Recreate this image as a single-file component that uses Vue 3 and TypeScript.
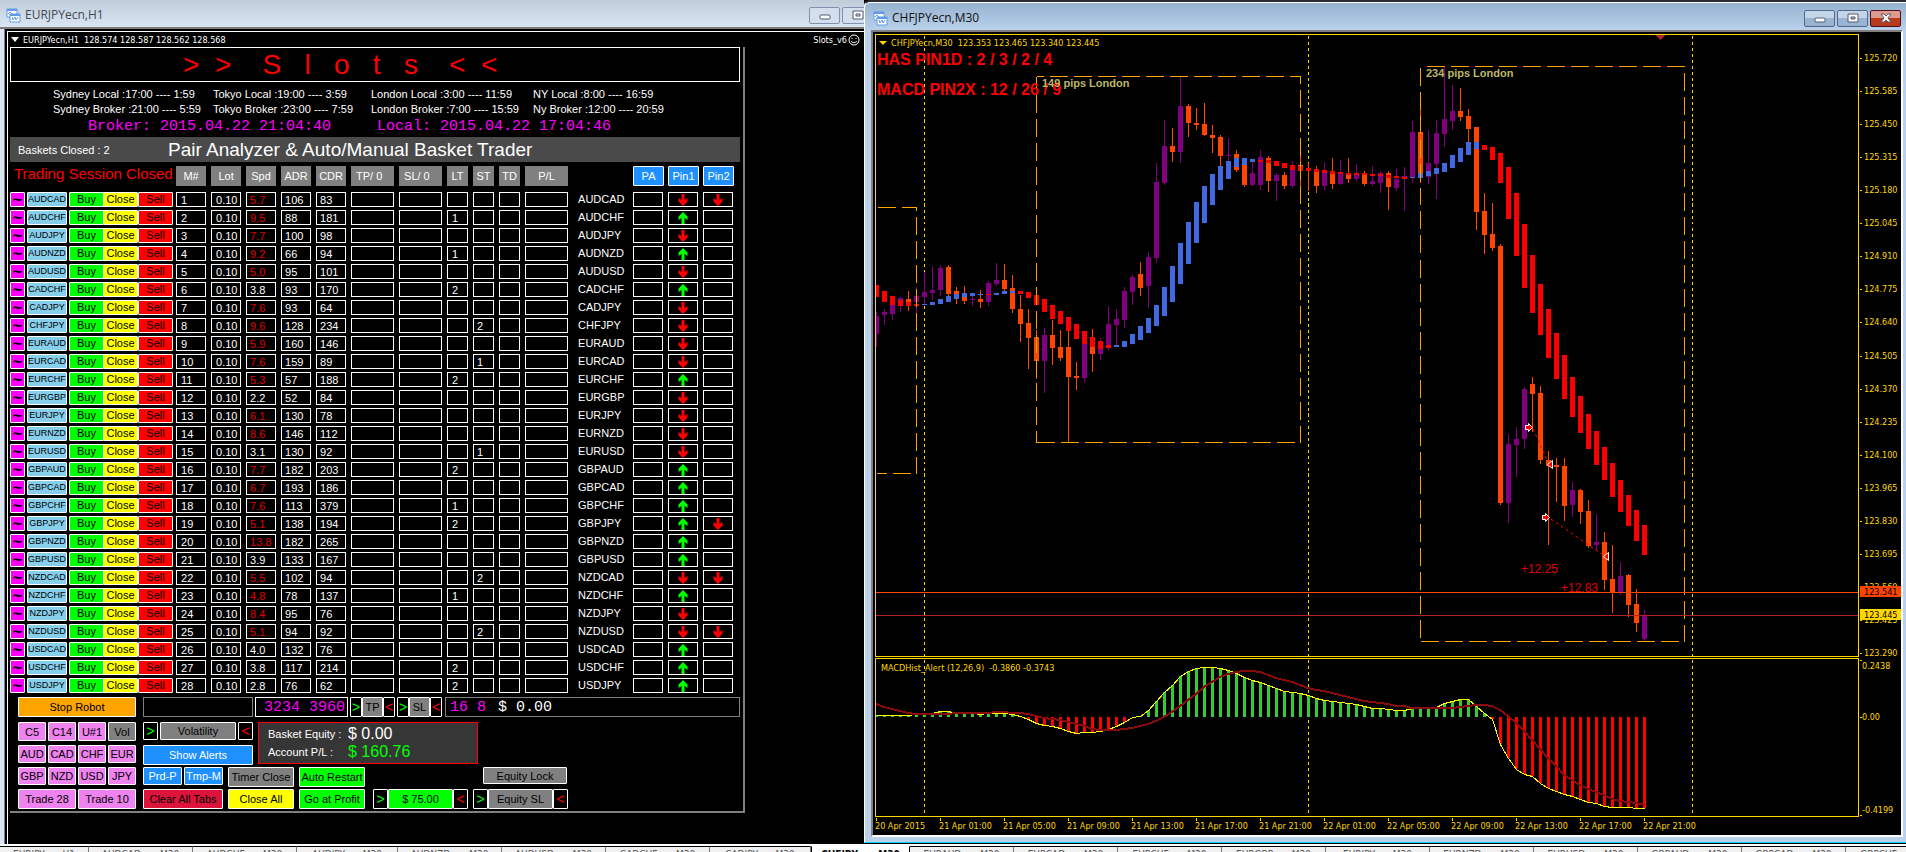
<script setup lang="ts">
type Dir = 'up' | 'down' | ''
interface PairRow {
  pair: string
  spread: string
  adr: number
  cdr: number
  lt: string
  st: string
  pin1: Dir
  pin2: Dir
}

const U: Dir = 'up'
const D: Dir = 'down'
const raw: [string, string, number, number, string, string, Dir, Dir][] = [
  ['AUDCAD', '5.7', 106, 83, '', '', D, D],
  ['AUDCHF', '9.5', 88, 181, '1', '', U, ''],
  ['AUDJPY', '7.7', 100, 98, '', '', D, ''],
  ['AUDNZD', '9.2', 66, 94, '1', '', U, ''],
  ['AUDUSD', '5.0', 95, 101, '', '', D, ''],
  ['CADCHF', '3.8', 93, 170, '2', '', U, ''],
  ['CADJPY', '7.6', 93, 64, '', '', D, ''],
  ['CHFJPY', '9.6', 128, 234, '', '2', D, ''],
  ['EURAUD', '5.9', 160, 146, '', '', D, ''],
  ['EURCAD', '7.6', 159, 89, '', '1', D, ''],
  ['EURCHF', '5.3', 57, 188, '2', '', U, ''],
  ['EURGBP', '2.2', 52, 84, '', '', D, ''],
  ['EURJPY', '6.1', 130, 78, '', '', D, ''],
  ['EURNZD', '8.6', 146, 112, '', '', D, ''],
  ['EURUSD', '3.1', 130, 92, '', '1', D, ''],
  ['GBPAUD', '7.7', 182, 203, '2', '', U, ''],
  ['GBPCAD', '6.7', 193, 186, '', '', U, ''],
  ['GBPCHF', '7.6', 113, 379, '1', '', U, ''],
  ['GBPJPY', '5.1', 138, 194, '2', '', U, D],
  ['GBPNZD', '13.8', 182, 265, '', '', U, ''],
  ['GBPUSD', '3.9', 133, 167, '', '', U, ''],
  ['NZDCAD', '5.5', 102, 94, '', '2', D, D],
  ['NZDCHF', '4.8', 78, 137, '1', '', U, ''],
  ['NZDJPY', '8.4', 95, 76, '', '', D, ''],
  ['NZDUSD', '5.1', 94, 92, '', '2', D, D],
  ['USDCAD', '4.0', 132, 76, '', '', U, ''],
  ['USDCHF', '3.8', 117, 214, '2', '', U, ''],
  ['USDJPY', '2.8', 76, 62, '2', '', U, ''],
]
const rows: PairRow[] = raw.map(([pair, spread, adr, cdr, lt, st, pin1, pin2]) => ({
  pair, spread, adr, cdr, lt, st, pin1, pin2,
}))

const slotsTitle = '>  >    S   l   o   t   s    <  <'
const heads = ['M#', 'Lot', 'Spd', 'ADR', 'CDR', 'TP/ 0', 'SL/ 0', 'LT', 'ST', 'TD', 'P/L']
const pins = ['PA', 'Pin1', 'Pin2']
const sessions = [
  'Sydney Local :17:00 ---- 1:59', 'Tokyo Local :19:00 ---- 3:59', 'London Local :3:00 ---- 11:59', 'NY Local :8:00 ---- 16:59',
  'Sydney Broker :21:00 ---- 5:59', 'Tokyo Broker :23:00 ---- 7:59', 'London Broker :7:00 ---- 15:59', 'Ny Broker :12:00 ---- 20:59',
]
const keys = ['C5', 'C14', 'U#1', 'Vol', 'AUD', 'CAD', 'CHF', 'EUR', 'GBP', 'NZD', 'USD', 'JPY']

/* Candles: direction, high, body top, body bottom, low */
const candles: [string, number, number, number, number][] = [
  ['b', 312, 316, 334, 346], ['b', 309, 312, 315, 324], ['b', 305, 305, 314, 319], ['b', 297, 298, 306, 311],
  ['s', 291, 299, 306, 310], ['b', 287, 296, 302, 312], ['b', 272, 292, 297, 304], ['b', 266, 290, 293, 299],
  ['b', 265, 268, 290, 295], ['s', 265, 267, 294, 296], ['s', 287, 291, 299, 303], ['s', 286, 293, 301, 303],
  ['b', 296, 299, 300, 305], ['s', 290, 299, 302, 307], ['b', 281, 283, 302, 305], ['b', 263, 280, 284, 285],
  ['s', 264, 280, 289, 291], ['s', 275, 288, 309, 312], ['s', 295, 309, 324, 341], ['s', 309, 323, 338, 368],
  ['s', 330, 337, 361, 378], ['b', 328, 335, 361, 392], ['s', 320, 335, 348, 364], ['s', 330, 347, 358, 360],
  ['s', 331, 347, 377, 442], ['s', 362, 376, 378, 389], ['b', 344, 344, 378, 382], ['s', 329, 347, 354, 371],
  ['b', 338, 349, 354, 359], ['b', 306, 324, 345, 350], ['b', 309, 319, 325, 344], ['b', 287, 291, 320, 327],
  ['b', 275, 277, 292, 304], ['s', 262, 274, 288, 295], ['b', 252, 257, 286, 307], ['b', 163, 182, 258, 262],
  ['b', 120, 146, 183, 184], ['s', 128, 146, 152, 161], ['b', 77, 106, 152, 162], ['s', 104, 106, 123, 136],
  ['s', 108, 123, 125, 129], ['s', 103, 124, 135, 135], ['s', 125, 135, 138, 152], ['s', 135, 137, 156, 166],
  ['b', 138, 155, 156, 160], ['s', 150, 154, 170, 171], ['s', 165, 165, 185, 186], ['b', 162, 173, 185, 185],
  ['b', 150, 157, 185, 189], ['s', 156, 158, 181, 191], ['b', 173, 175, 181, 200], ['s', 172, 175, 186, 188],
  ['b', 161, 165, 186, 187], ['s', 155, 165, 171, 190], ['s', 163, 168, 171, 190], ['s', 166, 169, 186, 192],
  ['b', 162, 170, 186, 189], ['s', 158, 171, 184, 188], ['b', 160, 172, 184, 184], ['s', 158, 173, 179, 182],
  ['b', 164, 174, 179, 180], ['s', 171, 173, 184, 185], ['b', 166, 181, 184, 185], ['b', 171, 173, 183, 192],
  ['s', 171, 173, 187, 209], ['b', 169, 179, 188, 190], ['b', 167, 176, 179, 210], ['b', 121, 132, 177, 182],
  ['s', 109, 132, 173, 182], ['b', 130, 163, 177, 183], ['b', 120, 133, 164, 198], ['b', 66, 119, 134, 146],
  ['b', 85, 111, 121, 129], ['s', 88, 111, 117, 120], ['s', 109, 116, 129, 142], ['s', 127, 127, 212, 229],
  ['s', 193, 211, 235, 253], ['s', 203, 234, 248, 250], ['s', 244, 246, 503, 504], ['b', 434, 444, 503, 522],
  ['b', 427, 439, 445, 476], ['b', 387, 389, 439, 448], ['s', 377, 384, 394, 431], ['s', 386, 393, 460, 463],
  ['s', 451, 460, 466, 544], ['s', 458, 465, 467, 501], ['s', 458, 466, 506, 520], ['b', 482, 490, 505, 516],
  ['s', 489, 490, 512, 523], ['s', 500, 511, 546, 547], ['b', 514, 542, 545, 550], ['s', 532, 542, 580, 589],
  ['s', 545, 579, 593, 612], ['b', 562, 576, 592, 594], ['s', 574, 575, 605, 616], ['s', 589, 604, 623, 631],
  ['b', 610, 615, 639, 641],
]

/* Trend ribbon blocks: colour, top, bottom */
const ribbon: [string, number, number][] = [
  ['r', 285, 297], ['r', 291, 302], ['r', 296, 305], ['r', 300, 306], ['r', 302, 306], ['r', 304, 306], ['u', 304, 305],
  ['u', 302, 305], ['u', 299, 304], ['u', 296, 302], ['u', 294, 299], ['u', 293, 297], ['u', 293, 296], ['u', 294, 295],
  ['r', 294, 295], ['u', 293, 295], ['u', 291, 294], ['u', 291, 293], ['r', 291, 294], ['r', 292, 298], ['r', 295, 305],
  ['r', 299, 312], ['r', 305, 319], ['r', 311, 324], ['r', 317, 331], ['r', 324, 339], ['r', 331, 344], ['r', 337, 347],
  ['r', 341, 349], ['r', 345, 348], ['u', 345, 347], ['u', 341, 347], ['u', 334, 344], ['u', 326, 340], ['u', 318, 333],
  ['u', 305, 326], ['u', 287, 316], ['u', 266, 302], ['u', 243, 284], ['u', 222, 264], ['u', 202, 243], ['u', 186, 223],
  ['u', 174, 205], ['u', 166, 190], ['u', 161, 179], ['u', 158, 167], ['u', 158, 165], ['u', 159, 162], ['r', 160, 162],
  ['r', 160, 163], ['r', 161, 166], ['r', 163, 168], ['r', 165, 170], ['r', 166, 171], ['r', 168, 171], ['r', 169, 172],
  ['r', 170, 173], ['r', 171, 174], ['r', 172, 174], ['r', 173, 175], ['r', 173, 175], ['r', 173, 175], ['r', 174, 176],
  ['r', 174, 176], ['r', 175, 178], ['r', 176, 178], ['r', 177, 179], ['u', 177, 178], ['u', 173, 178], ['u', 171, 176],
  ['u', 168, 174], ['u', 163, 172], ['u', 155, 168], ['u', 148, 162], ['u', 142, 155], ['u', 142, 149], ['r', 145, 150],
  ['r', 147, 160], ['r', 153, 183], ['r', 167, 219], ['r', 193, 256], ['r', 224, 288], ['r', 255, 313], ['r', 284, 335],
  ['r', 309, 358], ['r', 333, 379], ['r', 355, 399], ['r', 377, 417], ['r', 396, 433], ['r', 414, 449], ['r', 431, 465],
  ['r', 447, 480], ['r', 463, 497], ['r', 480, 512], ['r', 495, 526], ['r', 510, 541], ['r', 525, 555],
]

/* Oscillator values in thirds of a pixel below the pane origin; 231 is the zero level */
const macd = [
  226, 226, 226, 226, 226, 222, 221, 220, 214, 214, 219, 220, 219, 223, 219, 218, 218, 221, 229, 238, 250, 255, 259, 265,
  274, 280, 277, 277, 273, 268, 259, 247, 232, 227, 210, 184, 156, 135, 108, 94, 85, 82, 82, 85, 91, 100, 112, 121, 127,
  136, 145, 153, 157, 160, 165, 175, 179, 184, 187, 190, 193, 199, 203, 203, 208, 211, 211, 205, 205, 205, 200, 190, 184,
  178, 178, 199, 219, 237, 313, 355, 387, 401, 407, 428, 443, 452, 463, 469, 476, 485, 488, 497, 502, 502, 502, 505, 505,
]
const signal = [
  191, 200, 207, 213, 219, 221, 222, 222, 222, 222, 219, 219, 219, 219, 219, 216, 216, 219, 220, 223, 227, 233, 236, 240,
  247, 253, 259, 266, 269, 270, 270, 268, 265, 259, 253, 242, 230, 216, 197, 180, 162, 142, 127, 112, 102, 97, 93, 94, 97,
  104, 113, 119, 127, 134, 143, 149, 154, 160, 166, 172, 178, 182, 187, 190, 192, 198, 198, 203, 204, 204, 204, 204, 204,
  200, 197, 195, 196, 199, 210, 227, 249, 273, 300, 328, 353, 378, 406, 421, 435, 446, 457, 466, 476, 482, 487, 489, 496,
]
const zero = 717
const barX = (i: number): number => 876 + i * 8
const oscY = (v: number): number => Math.round(640 + v / 3)
const toPoints = (vals: number[]): string => vals.map((v, i) => `${barX(i)},${oscY(v)}`).join(' ')
const histogram = macd.map((v, i) => {
  const y = oscY(v)
  return { x: barX(i) - 1, y: Math.min(y, zero), h: Math.abs(y - zero), down: y > zero }
})

const prices = Array.from({ length: 19 }, (_, k) => ({
  label: (125.72 - 0.135 * k).toFixed(3),
  y: Math.round(58 + k * 33.06),
}))
const times = [
  '20 Apr 2015', '21 Apr 01:00', '21 Apr 05:00', '21 Apr 09:00', '21 Apr 13:00', '21 Apr 17:00', '21 Apr 21:00',
  '22 Apr 01:00', '22 Apr 05:00', '22 Apr 09:00', '22 Apr 13:00', '22 Apr 17:00', '22 Apr 21:00',
]
const dayLines = [924, 1308, 1692]

/* Session boxes: path of each side with its dash offset */
const boxSides: [string, number][] = [
  ['M877 207H916', 0], ['M916 207V473', 15], ['M876 473H916', 8],
  ['M1036 76H1300', 11], ['M1036 76V442', 6], ['M1036 442H1300', 0], ['M1300 76V442', 11],
  ['M1420 66H1684', 18], ['M1420 67V641', 0], ['M1420 641H1684', 0], ['M1684 66V641', 18],
]

const tabs = [
  'EURJPYecn,H1', 'AUDCADecn,M30', 'AUDCHFecn,M30', 'AUDJPYecn,M30', 'AUDNZDecn,M30', 'AUDUSDecn,M30', 'CADCHFecn,M30',
  'CADJPYecn,M30', 'CHFJPYecn,M30', 'EURAUDecn,M30', 'EURCADecn,M30', 'EURCHFecn,M30', 'EURGBPecn,M30', 'EURJPYecn,M30',
  'EURNZDecn,M30', 'EURUSDecn,M30', 'GBPAUDecn,M30', 'GBPCADecn,M30', 'GBPCHFecn,M30',
]
</script>

<template>
  <div class="desktop">
    <main class="windows">
      <section class="win win-left">
        <header class="title">
          <svg class="ticon" viewBox="0 0 15 15"><path d="M1 1h10v8H1z" fill="#fff" stroke="#5f9bea" /><path d="M1 2h10" stroke="#5f9bea" stroke-width="2" /><path d="M2 6l2-2 2 2" fill="none" stroke="#5f9bea" /><path d="M4 6h10v8H4z" fill="#fff" stroke="#5f9bea" /><path d="M4 7h10" stroke="#5f9bea" stroke-width="2" /><path d="M6 9l1 3 2-3 1 3 2-3" fill="none" stroke="#5f9bea" /></svg>
          <h1>EURJPYecn,H1</h1>
          <div class="wbtns">
            <button class="wb" aria-label="Minimize"><svg viewBox="0 0 12 12"><rect x="1" y="6" width="10" height="4" rx="1" fill="#fff" stroke="#555b6e" /></svg></button>
            <button class="wb" aria-label="Maximize"><svg viewBox="0 0 12 12"><path d="M1 2h10v8H1zM4 5h4v2H4z" fill="#fff" stroke="#555b6e" fill-rule="evenodd" /></svg></button>
          </div>
        </header>
        <div class="client">
          <div class="quote">
            <svg class="caret" viewBox="0 0 8 5"><path d="M0 0h8L4 5z" fill="#fff" /></svg>
            <span>EURJPYecn,H1&nbsp; 128.574 128.587 128.562 128.568</span>
            <span class="expert">Slots_v6<svg viewBox="0 0 12 12"><circle cx="6" cy="6" r="5" fill="none" stroke="#fff" /><path d="M4 4v1M8 4v1M3 7c1 2 5 2 6 0" fill="none" stroke="#fff" /></svg></span>
          </div>

          <div class="panel">
            <div class="slots">{{ slotsTitle }}</div>
            <div class="sessions"><span v-for="s in sessions" :key="s">{{ s }}</span></div>
            <div class="clock"><span>Broker: 2015.04.22 21:04:40</span><span>Local: 2015.04.22 17:04:46</span></div>
            <div class="banner"><span class="baskets">Baskets Closed : 2</span><h2>Pair Analyzer &amp; Auto/Manual Basket Trader</h2></div>

            <table class="grid">
              <colgroup>
                <col class="w17"><col class="w42"><col class="w34"><col class="w35"><col class="w38">
                <col v-for="n in 5" :key="n" class="w35">
                <col class="w48"><col class="w48"><col class="w26"><col class="w26"><col class="w26"><col class="w48">
                <col class="w60"><col class="w35"><col class="w35"><col>
              </colgroup>
              <thead>
                <tr>
                  <th colspan="5" class="closed">Trading Session Closed</th>
                  <th v-for="h in heads" :key="h"><div class="head" :class="{ early: h.includes('/ ') }">{{ h }}</div></th>
                  <th></th>
                  <th v-for="p in pins" :key="p"><button class="btn blue pin">{{ p }}</button></th>
                </tr>
              </thead>
              <tbody>
                <tr v-for="(r, i) in rows" :key="r.pair">
                  <td><button class="btn magenta tilde">~</button></td>
                  <td><button class="btn sky pair">{{ r.pair }}</button></td>
                  <td><button class="btn lime act">Buy</button></td>
                  <td><button class="btn yellow act">Close</button></td>
                  <td><button class="btn red act">Sell</button></td>
                  <td><div class="cell pad">{{ i + 1 }}</div></td>
                  <td><div class="cell pad">0.10</div></td>
                  <td><div class="cell" :class="{ hot: Number(r.spread) > 4.5 }">{{ r.spread }}</div></td>
                  <td><div class="cell">{{ r.adr }}</div></td>
                  <td><div class="cell">{{ r.cdr }}</div></td>
                  <td><div class="cell"></div></td>
                  <td><div class="cell"></div></td>
                  <td><div class="cell pad">{{ r.lt }}</div></td>
                  <td><div class="cell">{{ r.st }}</div></td>
                  <td><div class="cell"></div></td>
                  <td><div class="cell"></div></td>
                  <td class="name">{{ r.pair }}</td>
                  <td><div class="cell"></div></td>
                  <td v-for="(d, n) in [r.pin1, r.pin2]" :key="n">
                    <div class="cell mark">
                      <svg v-if="d === 'down'" viewBox="0 0 10 12"><path d="M3.500 0h3v6l3-2v3.500L5 12 .5 7.500V4l3 2z" fill="#f00" /></svg>
                      <svg v-else-if="d === 'up'" viewBox="0 0 10 12"><path d="M3.500 12h3V6l3 2V4.500L5 0 .5 4.500V8l3-2z" fill="#0f0" /></svg>
                    </div>
                  </td>
                </tr>
              </tbody>
            </table>

            <div class="robot">
              <button class="btn orange stop">Stop Robot</button>
              <div class="readout empty"></div>
              <div class="readout white">3234 3960</div>
              <div class="stepper"><button class="btn step up">&gt;</button><button class="btn gray mid">TP</button><button class="btn step dn">&lt;</button></div>
              <div class="stepper"><button class="btn step up">&gt;</button><button class="btn gray mid">SL</button><button class="btn step dn">&lt;</button></div>
              <div class="readout wide"><span>16 8</span><b>$ 0.00</b></div>
            </div>

            <div class="controls">
              <div class="keypad">
                <button v-for="k in keys" :key="k" class="btn" :class="k === 'Vol' ? 'gray' : 'violet'">{{ k }}</button>
                <button class="btn violet half">Trade 28</button>
                <button class="btn violet half">Trade 10</button>
              </div>
              <div class="rest">
                <div class="upper">
                  <div class="vol">
                    <div class="volrow"><button class="btn step up">&gt;</button><button class="btn gray fill">Volatility</button><button class="btn step dn">&lt;</button></div>
                    <button class="btn blue alerts">Show Alerts</button>
                  </div>
                  <dl class="equity">
                    <dt>Basket Equity :</dt><dd>$ 0.00</dd>
                    <dt>Account P/L :</dt><dd class="gain">$ 160.76</dd>
                  </dl>
                </div>
                <div class="line">
                  <div class="duo"><button class="btn blue">Prd-P</button><button class="btn blue">Tmp-M</button></div>
                  <button class="btn gray w66">Timer Close</button>
                  <button class="btn lime w66">Auto Restart</button>
                  <button class="btn gray lock">Equity Lock</button>
                </div>
                <div class="line">
                  <button class="btn crimson w80">Clear All Tabs</button>
                  <button class="btn yellow w66">Close All</button>
                  <button class="btn lime w66">Go at Profit</button>
                  <div class="trio"><button class="btn step up">&gt;</button><button class="btn lime fill">$ 75.00</button><button class="btn step dn">&lt;</button></div>
                  <div class="trio"><button class="btn step up">&gt;</button><button class="btn gray fill">Equity SL</button><button class="btn step dn">&lt;</button></div>
                </div>
              </div>
            </div>
          </div>
        </div>
      </section>

      <section class="win win-right">
        <header class="title">
          <svg class="ticon" viewBox="0 0 15 15"><path d="M1 1h10v8H1z" fill="#fff" stroke="#5f9bea" /><path d="M1 2h10" stroke="#5f9bea" stroke-width="2" /><path d="M2 6l2-2 2 2" fill="none" stroke="#5f9bea" /><path d="M4 6h10v8H4z" fill="#fff" stroke="#5f9bea" /><path d="M4 7h10" stroke="#5f9bea" stroke-width="2" /><path d="M6 9l1 3 2-3 1 3 2-3" fill="none" stroke="#5f9bea" /></svg>
          <h1>CHFJPYecn,M30</h1>
          <div class="wbtns">
            <button class="wb" aria-label="Minimize"><svg viewBox="0 0 12 12"><rect x="1" y="6" width="10" height="4" rx="1" fill="#fff" stroke="#555b6e" /></svg></button>
            <button class="wb" aria-label="Maximize"><svg viewBox="0 0 12 12"><path d="M1 2h10v8H1zM4 5h4v2H4z" fill="#fff" stroke="#555b6e" fill-rule="evenodd" /></svg></button>
            <button class="wb close" aria-label="Close"><svg viewBox="0 0 12 12"><path d="M1 2h3l2 2 2-2h3L8 6l3 4H8L6 8l-2 2H1l3-4z" fill="#fff" stroke="#555b6e" /></svg></button>
          </div>
        </header>
        <div class="chartbox">
          <svg class="chart" viewBox="873 32 1028 802" preserveAspectRatio="xMinYMin meet">
            <defs><clipPath id="plot"><rect x="876" y="35" width="982" height="781" /></clipPath></defs>

            <g class="crisp">
              <path d="M875 34H1859V657H875zM876 35V656H1858V35z" fill="#ffd700" fill-rule="evenodd" />
              <path d="M875 658H1859V817H875zM876 659V816H1858V659z" fill="#ffd700" fill-rule="evenodd" />
              <path d="M1656 35h9l-4 5h-1z" fill="#b22222" />
              <g class="px" fill="none" stroke="#ffd700">
                <path v-for="x in dayLines" :key="x" :d="`M${x} 35V656M${x} 659V816`" stroke-dasharray="3 3" />
                <path v-for="p in prices" :key="p.label" :d="`M1859 ${p.y}h2`" />
                <path d="M1859 660h2M1859 717h2M1859 815h2" />
                <path v-for="(t, i) in times" :key="t" :d="`M${876 + i * 64} 817v3`" />
              </g>
            </g>

            <g class="crisp" clip-path="url(#plot)">
              <g v-for="(c, i) in candles" :key="i" :fill="c[0] === 'b' ? '#800080' : '#ff4500'">
                <rect :x="barX(i)" :y="c[1]" width="1" :height="c[4] - c[1] + 1" />
                <rect :x="barX(i) - 2" :y="c[2]" width="5" :height="Math.max(1, c[3] - c[2])" />
              </g>
              <rect v-for="(m, i) in ribbon" :key="i" :x="barX(i) - 2" :y="m[1]" width="5" :height="m[2] - m[1]" :fill="m[0] === 'r' ? '#f00' : '#4169e1'" />
              <g class="px" fill="none" stroke="#ffa500" stroke-dasharray="18 6">
                <path v-for="s in boxSides" :key="s[0]" :d="s[0]" :stroke-dashoffset="s[1]" />
              </g>
              <rect x="876" y="592" width="982" height="1" fill="#ff4500" />
              <rect x="876" y="615" width="982" height="1" fill="#b22222" />

              <rect v-for="b in histogram" :key="b.x" :x="b.x" :y="b.y" width="3" :height="b.h" :fill="b.down ? '#f00' : '#32cd32'" />
              <polyline class="px" :points="toPoints(macd)" fill="none" stroke="#ff0" />
              <polyline :points="toPoints(signal)" fill="none" stroke="#8b0a0a" stroke-width="2" />
            </g>

            <g fill="none" stroke="#f00" stroke-dasharray="3 3">
              <path d="M1533 429L1548 462" />
              <path d="M1551 519L1603 555" />
            </g>
            <g fill="#f00" stroke="#fff">
              <path d="M1525.500 425.500h3v-2l4 4-4 4v-2h-3z" />
              <path d="M1542.500 515.500h3v-2l4 4-4 4v-2h-3z" />
              <path d="M1552.500 460.500v8l-5-4z" />
              <path d="M1608.500 552.500v8l-5-4z" />
            </g>

            <path d="M879 41h8l-4 4z" fill="#ffd700" />
            <g class="axis">
              <text x="891" y="46">CHFJPYecn,M30&#160; 123.353 123.465 123.340 123.445</text>
              <text x="881" y="671">MACDHist_Alert (12,26,9)&#160; -0.3860 -0.3743</text>
              <text v-for="p in prices" :key="p.label" x="1864" :y="p.y + 3">{{ p.label }}</text>
              <text x="1862" y="669">0.2438</text>
              <text x="1862" y="720">0.00</text>
              <text x="1862" y="813">-0.4199</text>
              <text v-for="(t, i) in times" :key="t" :x="875 + i * 64" y="829">{{ t }}</text>
              <rect x="1860" y="586" width="41" height="11" fill="#ff4500" />
              <text x="1864" y="595" class="dark">123.541</text>
              <rect x="1860" y="609" width="41" height="11" fill="#ffd700" />
              <text x="1864" y="618" class="dark">123.445</text>
            </g>
            <g class="alert">
              <text x="877" y="65">HAS PIN1D : 2 / 3 / 2 / 4</text>
              <text x="877" y="95">MACD PIN2X : 12 / 26 / 9</text>
            </g>
            <g class="pips">
              <text x="1042" y="87">149 pips London</text>
              <text x="1426" y="77">234 pips London</text>
            </g>
            <g class="profit">
              <text x="1521" y="573">+12.25</text>
              <text x="1561" y="592">+12.83</text>
            </g>
          </svg>
        </div>
      </section>
    </main>

    <nav class="tabs">
      <button v-for="(t, i) in tabs" :key="i" class="tab" :class="{ first: i === 0, narrow: i === 3 || i === 7, active: i === 8 }">{{ t }}</button>
    </nav>
  </div>
</template>

<style>
body {
  background: #000;
}
</style>

<style scoped>
* {
  box-sizing: border-box;
}
.desktop {
  height: 100vh;
  display: flex;
  flex-direction: column;
  overflow: hidden;
  font-family: "Liberation Sans", Arial, sans-serif;
  font-size: 11px;
  color: #fff;
  background: #000;
}
.windows {
  flex: 1;
  min-height: 0;
  display: grid;
  grid-template-columns: minmax(0, 864fr) minmax(0, 1042fr);
}
.win {
  display: flex;
  flex-direction: column;
  min-width: 0;
  min-height: 0;
}
.title {
  display: flex;
  align-items: center;
  flex: none;
  overflow: hidden;
  color: #45494f;
}
.title h1 {
  margin: 0;
  flex: 1;
  font: 12px/16px "Open Sans", "Noto Sans", sans-serif;
}
.ticon {
  width: 15px;
  height: 15px;
  margin-right: 4px;
}
.wbtns {
  display: flex;
  gap: 2px;
  flex: none;
}
.wb {
  width: 31px;
  height: 17px;
  padding: 0;
  border: 1px solid #8391ac;
  border-radius: 2px;
  background: #d3dfec;
  display: flex;
  align-items: center;
  justify-content: center;
}
.wb svg {
  width: 12px;
  height: 12px;
}

/* left window */
.win-left .title {
  height: 29px;
  padding: 3px 0 0 6px;
  background: linear-gradient(#bfcddb, #d9e5f2);
  border-bottom: 2px solid #7c7c7c;
}
.win-left .wbtns {
  margin-right: -9px;
}
.client {
  position: relative;
  flex: 1;
  min-height: 0;
  border-left: 4px solid #d9e4f0;
  box-shadow: inset 1px 0 #808080;
  padding: 2px 0 0 3px;
}
.client::before {
  content: "";
  position: absolute;
  left: 3px;
  top: 2px;
  bottom: 0;
  border-left: 1px solid #fff;
}
.quote {
  display: flex;
  align-items: center;
  height: 16px;
  padding: 0 4px 0 4px;
  border-top: 1px solid #fff;
  font: 9px "DejaVu Sans Condensed", "DejaVu Sans", sans-serif;
}
.caret {
  width: 8px;
  height: 5px;
  margin-right: 4px;
}
.expert {
  margin-left: auto;
  display: flex;
  align-items: center;
  gap: 1px;
}
.expert svg {
  width: 12px;
  height: 12px;
}
.panel {
  max-width: 735px;
  margin-left: 3px;
  border-right: 2px solid #808080;
  border-bottom: 2px solid #808080;
  padding-right: 3px;
}
.slots {
  height: 35px;
  border: 1px solid #fff;
  padding-left: 172px;
  font-size: 28px;
  line-height: 34px;
  color: #f00;
  white-space: pre;
  overflow: hidden;
}
.sessions {
  display: grid;
  grid-template-columns: 160px 158px 162px 1fr;
  grid-auto-rows: 15px;
  line-height: 15px;
  padding: 5px 0 0 43px;
  white-space: nowrap;
}
.clock {
  display: flex;
  gap: 46px;
  height: 20px;
  padding-left: 78px;
  font: 15px/20px "Liberation Mono", monospace;
  color: #f0f;
}
.banner {
  display: flex;
  align-items: center;
  height: 25px;
  padding-left: 8px;
  background: #4a4a4a;
}
.baskets {
  width: 150px;
}
.banner h2 {
  margin: 0;
  font-size: 19px;
  font-weight: normal;
}

.grid {
  width: 100%;
  table-layout: fixed;
  border-collapse: collapse;
  margin-top: 4px;
}
.grid th,
.grid td {
  padding: 0;
  height: 18px;
  vertical-align: top;
  font-weight: normal;
  text-align: left;
}
.grid th {
  height: 26px;
}
.w17 { width: 17px; }
.w42 { width: 42px; }
.w34 { width: 34px; }
.w35 { width: 35px; }
.w38 { width: 38px; }
.w48 { width: 48px; }
.w26 { width: 26px; }
.w60 { width: 60px; }
.grid .closed {
  padding-left: 4px;
  font-size: 15px;
  line-height: 15px;
  color: #f00;
}
.head {
  height: 20px;
  margin-right: 5px;
  background: #808080;
  line-height: 20px;
  text-align: center;
}
.head.early {
  padding-left: 5px;
  text-align: left;
}
.cell {
  height: 15px;
  margin-right: 5px;
  border: 1px solid #fff;
  padding-left: 3px;
  line-height: 15px;
}
.grid td:last-child .cell {
  margin-right: 7px;
}
.cell.pad {
  padding-left: 4px;
}
.cell.hot {
  color: #e00000;
}
.cell.mark {
  padding: 0;
  display: flex;
  justify-content: center;
  align-items: center;
}
.cell.mark svg {
  width: 10px;
  height: 12px;
}
.grid .name {
  padding-left: 5px;
  line-height: 15px;
}

.btn {
  display: block;
  padding: 0;
  border: 1px solid #fff;
  border-radius: 1px;
  font: 11px "Liberation Sans", Arial, sans-serif;
  color: #000;
  text-align: center;
  white-space: nowrap;
  overflow: hidden;
}
.grid .btn {
  height: 15px;
  line-height: 13px;
}
.grid .tilde {
  width: 15px;
  font-size: 16px;
  font-weight: bold;
}
.grid .pair {
  width: 40px;
  font-size: 9px;
}
.grid .act {
  width: 35px;
}
.grid .pin {
  width: 31px;
  height: 20px;
}
.magenta { background: #f0f; }
.sky { background: #87ceeb; }
.lime { background: #0f0; }
.yellow { background: #ff0; }
.red { background: #f00; }
.blue { background: #1e90ff; color: #fff; }
.orange { background: #ffa500; }
.gray { background: #808080; }
.violet { background: #ee82ee; }
.crimson { background: #dc143c; }
.step {
  flex: none;
  width: 15px;
  background: #000;
  font-size: 14px;
  line-height: 16px;
}
.up { color: #0f0; }
.dn { color: #f00; }

.robot {
  display: flex;
  gap: 2px;
  height: 20px;
  margin-top: 1px;
  padding-left: 8px;
}
.stop {
  width: 118px;
  margin-right: 5px;
}
.readout {
  border: 1px solid #808080;
  font: 15px/20px "Liberation Mono", monospace;
  color: #f0f;
}
.readout.empty {
  width: 110px;
}
.readout.white {
  width: 93px;
  border-color: #fff;
  padding-left: 8px;
}
.readout.wide {
  flex: 1;
  margin-left: 1px;
  padding-left: 4px;
  display: flex;
  gap: 12px;
}
.readout b {
  font-weight: normal;
  color: #fff;
}
.stepper {
  display: flex;
}
.stepper .step {
  width: 12px;
}
.stepper .mid {
  width: 21px;
}

.controls {
  display: flex;
  gap: 7px;
  padding: 5px 0 2px 8px;
}
.keypad {
  width: 118px;
  display: grid;
  grid-template-columns: repeat(4, 1fr);
  grid-template-rows: 19px 18px 18px 20px;
  gap: 4px 2px;
}
.keypad .half {
  grid-column: span 2;
}
.rest {
  flex: 1;
  display: flex;
  flex-direction: column;
  gap: 2px;
}
.upper {
  display: flex;
  gap: 5px;
}
.vol {
  width: 110px;
  display: flex;
  flex-direction: column;
  gap: 5px;
}
.volrow {
  display: flex;
  gap: 2px;
  height: 18px;
}
.fill {
  flex: 1;
}
.alerts {
  height: 20px;
}
.equity {
  width: 220px;
  height: 42px;
  margin: 0;
  padding: 2px 9px;
  border: 1px solid #f00;
  background: #363636;
  display: grid;
  grid-template-columns: 80px 1fr;
  grid-auto-rows: 18px;
  line-height: 18px;
}
.equity dd {
  margin: 0;
  font-size: 16px;
}
.equity .gain {
  color: #0f0;
}
.line {
  display: flex;
  gap: 5px;
  height: 20px;
}
.duo {
  width: 80px;
  height: 18px;
  display: grid;
  grid-template-columns: 1fr 1fr;
  gap: 2px;
}
.w80 { width: 80px; }
.w66 { width: 66px; }
.lock {
  width: 84px;
  height: 17px;
  margin-left: 113px;
}
.trio {
  width: 95px;
  display: flex;
}
.line > .btn + .trio {
  margin-left: 3px;
}

/* right window */
.win-right {
  border-top: 2px solid #2c2c34;
  border-left: 1px solid #fff;
  border-radius: 6px 0 0 0;
  background: #b9d1ea;
  border-bottom: 1px solid #00d5ff;
  margin-bottom: 1px;
  z-index: 1;
}
.win-right .title {
  height: 28px;
  padding: 3px 5px 0 8px;
  border-top: 1px solid #fff;
  border-radius: 6px 0 0 0;
  background: linear-gradient(#97b2d1, #b9d1ea);
  color: #111;
}
.win-right .wb {
  border-color: #52698a;
  background: linear-gradient(#c3d5e8 50%, #98b4d2 50%);
}
.win-right .wb.close {
  border-color: #4a1420;
  background: linear-gradient(#dd9a8d 50%, #b9391e 50%);
}
.chartbox {
  flex: 1;
  min-height: 0;
  margin: 0 3px 5px 6px;
  border-style: solid;
  border-width: 2px;
  border-color: #808080 #fff #fff #808080;
  background: #000;
  overflow: hidden;
}
.chart {
  display: block;
  width: 100%;
  height: auto;
}
.crisp {
  shape-rendering: crispEdges;
}
.px {
  transform: translate(0.5px, 0.5px);
}
.axis {
  font: 9px "DejaVu Sans Condensed", "DejaVu Sans", sans-serif;
  fill: #ffd700;
}
.axis .dark {
  fill: #000;
}
.alert {
  font: bold 16px "Liberation Sans", Arial, sans-serif;
  fill: #f00;
}
.pips {
  font: bold 11px "Liberation Sans", Arial, sans-serif;
  fill: #bdb76b;
}
.profit {
  font: 12px "Liberation Sans", Arial, sans-serif;
  fill: #e00000;
}

/* chart tabs */
.tabs {
  flex: none;
  height: 8px;
  display: flex;
  align-items: flex-start;
  border-top: 2px solid #fff;
  background: #f0f0f0;
}
.tab {
  flex: none;
  width: 104px;
  height: 17px;
  padding: 0;
  border: 0;
  border-top: 1px solid #000;
  border-right: 1px solid #777;
  background: #f0f0f0;
  color: #555;
  font: 10px/14px "DejaVu Sans Condensed", "DejaVu Sans", sans-serif;
}
.tab.first {
  width: 89px;
}
.tab.narrow {
  width: 101px;
}
.tab.active {
  width: 99px;
  border-top-color: #fff;
  border-left: 1px solid #000;
  border-right-color: #000;
  background: #fff;
  color: #000;
  font-weight: bold;
}
</style>
